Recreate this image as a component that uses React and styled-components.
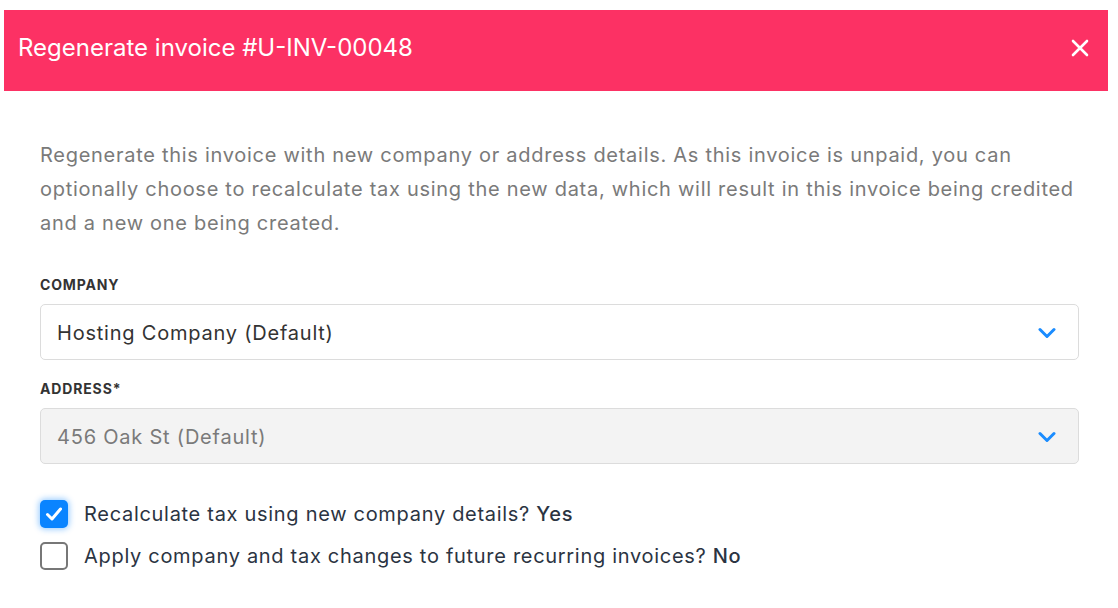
import React, { useState } from 'react';
import styled, { createGlobalStyle } from 'styled-components';

const GlobalStyle = createGlobalStyle`
  html, body {
    margin: 0;
    padding: 0;
    background: #ffffff;
  }
  body {
    font-family: Inter, 'Noto Sans', 'Liberation Sans', sans-serif;
    -webkit-font-smoothing: antialiased;
  }
`;

const Chevron = () => (
  <svg width="18" height="12" viewBox="0 0 18 12" fill="none">
    <path d="M2 2.5 L9 9.5 L16 2.5" stroke="#1a8cff" strokeWidth="3" strokeLinecap="round" strokeLinejoin="round" />
  </svg>
);

const CloseIcon = () => (
  <svg width="18" height="18" viewBox="0 0 18 18" fill="none">
    <path d="M2 2 L16 16 M16 2 L2 16" stroke="#ffffff" strokeWidth="2.6" strokeLinecap="round" />
  </svg>
);

const CheckIcon = () => (
  <svg width="18" height="16" viewBox="0 0 18 16" fill="none">
    <path d="M2.5 8.5 L7 13 L15.5 3" stroke="#ffffff" strokeWidth="3" strokeLinecap="round" strokeLinejoin="round" />
  </svg>
);

const App = () => {
  const [recalc, setRecalc] = useState(true);
  const [future, setFuture] = useState(false);

  return (
    <>
      <GlobalStyle />
      <Modal>
        <Header>
          <Title>Regenerate invoice #U-INV-00048</Title>
          <CloseButton>
            <CloseIcon />
          </CloseButton>
        </Header>

        <Body>
          <Intro>
            Regenerate this invoice with new company or address details. As this invoice is unpaid, you can
            <br />
            optionally choose to recalculate tax using the new data, which will result in this invoice being credited
            <br />
            and a new one being created.
          </Intro>

          <Field>
            <Label>Company</Label>
            <Select>
              <SelectValue>Hosting Company (Default)</SelectValue>
              <Chevron />
            </Select>
          </Field>

          <Field>
            <Label>Address*</Label>
            <Select disabled>
              <SelectValue disabled>456 Oak St (Default)</SelectValue>
              <Chevron />
            </Select>
          </Field>

          <Options>
            <CheckRow onClick={() => setRecalc(!recalc)}>
              <Box checked={recalc}>{recalc && <CheckIcon />}</Box>
              <CheckText>
                Recalculate tax using new company details? <Answer>{recalc ? 'Yes' : 'No'}</Answer>
              </CheckText>
            </CheckRow>
            <CheckRow onClick={() => setFuture(!future)}>
              <Box checked={future}>{future && <CheckIcon />}</Box>
              <CheckText>
                Apply company and tax changes to future recurring invoices? <Answer>{future ? 'Yes' : 'No'}</Answer>
              </CheckText>
            </CheckRow>
          </Options>
        </Body>
      </Modal>
    </>
  );
};

export default App;

// Styled components
const Modal = styled.div`
  width: 1104px;
  margin: 10px 0 0 4px;
  background: #ffffff;
`;

const Header = styled.div`
  height: 81px;
  background: #fc3164;
  display: flex;
  align-items: center;
  justify-content: space-between;
  padding: 0 19px 0 14px;
  box-sizing: border-box;
`;

const Title = styled.h1`
  margin: 0;
  margin-top: -6px;
  font-size: 24px;
  font-weight: 400;
  color: #ffffff;
`;

const CloseButton = styled.div`
  display: flex;
  align-items: center;
  margin-top: -5px;
  cursor: pointer;
`;

const Body = styled.div`
  padding: 47px 29px 0 36px;
`;

const Intro = styled.p`
  margin: 0 0 35px;
  font-size: 20px;
  line-height: 34px;
  letter-spacing: 0.72px;
  color: #7a7a7a;
  white-space: nowrap;
`;

const Field = styled.div`
  display: flex;
  flex-direction: column;
  margin-bottom: 19px;
`;

const Label = styled.label`
  font-size: 14px;
  line-height: 20px;
  font-weight: 700;
  text-transform: uppercase;
  letter-spacing: 0.85px;
  color: #333333;
  margin-bottom: 9px;
`;

const Select = styled.div`
  height: 56px;
  box-sizing: border-box;
  border: 1px solid #dcdcdc;
  border-radius: 5px;
  background: ${(p) => (p.disabled ? '#f3f3f3' : '#ffffff')};
  display: flex;
  align-items: center;
  justify-content: space-between;
  padding: 2px 22px 0 16px;
`;

const SelectValue = styled.span`
  font-size: 20px;
  letter-spacing: 0.78px;
  color: ${(p) => (p.disabled ? '#7a7a7a' : '#333333')};
`;

const Options = styled.div`
  display: flex;
  flex-direction: column;
  gap: 14px;
  margin-top: 36px;
`;

const CheckRow = styled.div`
  display: flex;
  align-items: center;
  gap: 16px;
  cursor: pointer;
`;

const Box = styled.span`
  width: 28px;
  height: 28px;
  box-sizing: border-box;
  border-radius: 5px;
  display: flex;
  align-items: center;
  justify-content: center;
  background: ${(p) => (p.checked ? '#0a84ff' : '#ffffff')};
  border: ${(p) => (p.checked ? 'none' : '2px solid #777777')};
  box-shadow: ${(p) => (p.checked ? '0 0 6px 1px rgba(10, 132, 255, 0.45)' : 'none')};
`;

const CheckText = styled.span`
  font-size: 20px;
  letter-spacing: 0.7px;
  color: #2b3442;
`;

const Answer = styled.span`
  font-weight: 500;
`;
